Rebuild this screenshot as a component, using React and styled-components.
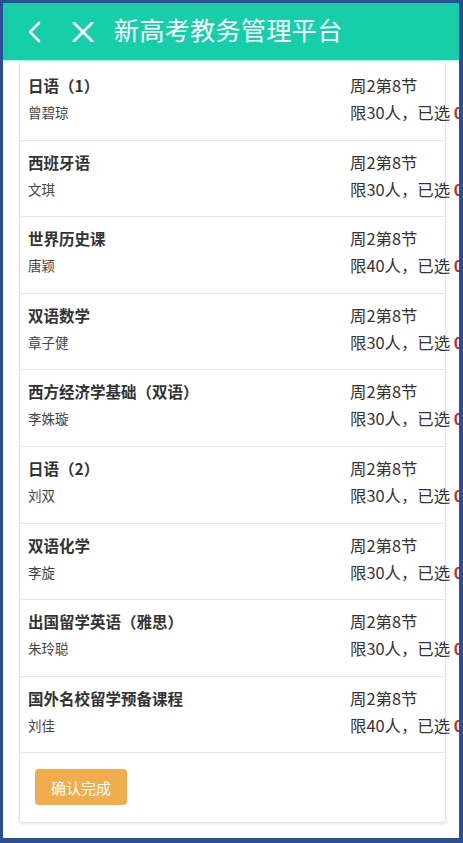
import React from "react";
import styled, { createGlobalStyle } from "styled-components";

const GlobalStyle = createGlobalStyle`
  body {
    margin: 0;
    background: #ffffff;
    font-family: "Noto Sans CJK SC", "Noto Sans", sans-serif;
  }
`;

const Frame = styled.div`
  box-sizing: border-box;
  width: 463px;
  height: 843px;
  border-style: solid;
  border-color: #2c4e94;
  border-width: 3px 4px 5px 3px;
  background: #ffffff;
  overflow: hidden;
  display: flex;
  flex-direction: column;
`;

const Header = styled.div`
  flex: none;
  height: 57px;
  background: #16cfaa;
  border-bottom: 1px solid #bdeee1;
  display: flex;
  align-items: center;
  color: #ffffff;

  .icon {
    display: flex;
    align-items: center;
    justify-content: center;
  }

  .back {
    margin-left: 19px;
    width: 24px;
  }

  .close {
    margin-left: 24px;
    width: 26px;
  }

  .title {
    margin-left: 18px;
    font-size: 25px;
    letter-spacing: 0.4px;
    line-height: 1;
    padding-bottom: 4px;
  }
`;

const Main = styled.div`
  flex: 1;
  padding: 0 14px 0 16px;
`;

const Card = styled.div`
  box-sizing: border-box;
  width: 427px;
  padding-top: 3px;
  border: 1px solid #dbe6ed;
  border-top: none;
  border-radius: 0 0 3px 3px;
  box-shadow: 0 1px 3px rgba(170, 195, 210, 0.45);
  background: #ffffff;
`;

const Row = styled.div`
  box-sizing: border-box;
  height: 76.6px;
  padding: 8px 0 0 8px;
  border-bottom: 1px solid #e3e8ec;
  display: grid;
  grid-template-columns: 322px auto;
  white-space: nowrap;
`;

const Col = styled.div`
  display: flex;
  flex-direction: column;
`;

const Name = styled.span`
  font-size: 15.5px;
  font-weight: 700;
  line-height: 26px;
  color: #333333;
`;

const Teacher = styled.span`
  font-size: 13.5px;
  line-height: 28px;
  color: #444444;
`;

const Info = styled.span`
  font-size: 16.4px;
  line-height: ${props => (props.first ? "26px" : "28px")};
  color: #333333;

  b {
    color: #b8302c;
    font-weight: 700;
  }
`;

const Footer = styled.div`
  padding: 16px 15px 17px;
`;

const Button = styled.button`
  box-sizing: border-box;
  width: 92px;
  height: 36px;
  border: none;
  border-radius: 4px;
  background: #f0ad4e;
  color: #ffffff;
  font-family: "Noto Sans CJK SC", sans-serif;
  font-size: 15px;
  cursor: pointer;
`;

const courses = [
  { name: "日语（1）", teacher: "曾碧琼", limit: 30 },
  { name: "西班牙语", teacher: "文琪", limit: 30 },
  { name: "世界历史课", teacher: "唐颖", limit: 40 },
  { name: "双语数学", teacher: "章子健", limit: 30 },
  { name: "西方经济学基础（双语）", teacher: "李姝璇", limit: 30 },
  { name: "日语（2）", teacher: "刘双", limit: 30 },
  { name: "双语化学", teacher: "李旋", limit: 30 },
  { name: "出国留学英语（雅思）", teacher: "朱玲聪", limit: 30 },
  { name: "国外名校留学预备课程", teacher: "刘佳", limit: 40 },
];

const App = () => {
  return (
    <>
      <GlobalStyle />
      <Frame>
        <Header>
          <span className="icon back">
            <svg width="16" height="22" viewBox="0 0 16 22">
              <path d="M13 2 L4 11 L13 20" fill="none" stroke="#fff" strokeWidth="2.6" strokeLinecap="round" strokeLinejoin="round" />
            </svg>
          </span>
          <span className="icon close">
            <svg width="22" height="20" viewBox="0 0 22 20">
              <path d="M2 1 L20 19 M20 1 L2 19" fill="none" stroke="#fff" strokeWidth="2.6" strokeLinecap="round" />
            </svg>
          </span>
          <span className="title">新高考教务管理平台</span>
        </Header>
        <Main>
          <Card>
            {courses.map(c => (
              <Row key={c.name}>
                <Col>
                  <Name>{c.name}</Name>
                  <Teacher>{c.teacher}</Teacher>
                </Col>
                <Col>
                  <Info first>周2第8节</Info>
                  <Info>
                    限{c.limit}人，已选 <b>0</b>
                  </Info>
                </Col>
              </Row>
            ))}
            <Footer>
              <Button>确认完成</Button>
            </Footer>
          </Card>
        </Main>
      </Frame>
    </>
  );
};

export default App;
